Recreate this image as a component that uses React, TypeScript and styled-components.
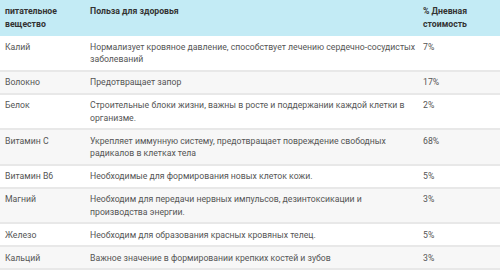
import React from "react";
import styled, { createGlobalStyle } from "styled-components";

const GlobalStyle = createGlobalStyle`
  html, body {
    margin: 0;
    padding: 0;
    background: #ffffff;
  }
  body {
    font-family: Roboto, "Noto Sans", sans-serif;
  }
`;

const StyledTable = styled.table`
  width: 500px;
  border-collapse: collapse;
  table-layout: fixed;
  font-size: 8.7px;
  line-height: 12.5px;
  color: #555555;
`;

const StyledHeadCell = styled.th<{ $width: number }>`
  width: ${(p) => p.$width}px;
  background: #c3ebf5;
  color: #333333;
  font-weight: 700;
  line-height: 13px;
  text-align: left;
  vertical-align: top;
  padding: 5px 2px 5px 5px;
`;

const StyledRow = styled.tr<{ $striped: boolean }>`
  background: ${(p) => (p.$striped ? "#f7f7f7" : "#ffffff")};
  border-bottom: 2px solid #e8e8e8;
`;

const StyledCell = styled.td`
  vertical-align: top;
  padding: 4.5px 2px 4px 5px;
`;

const rows = [
  ["Калий", "Нормализует кровяное давление, способствует лечению сердечно-сосудистых заболеваний", "7%"],
  ["Волокно", "Предотвращает запор", "17%"],
  ["Белок", "Строительные блоки жизни, важны в росте и поддержании каждой клетки в организме.", "2%"],
  ["Витамин C", "Укрепляет иммунную систему, предотвращает повреждение свободных радикалов в клетках тела", "68%"],
  ["Витамин B6", "Необходимые для формирования новых клеток кожи.", "5%"],
  ["Магний", "Необходим для передачи нервных импульсов, дезинтоксикации и производства энергии.", "3%"],
  ["Железо", "Необходим для образования красных кровяных телец.", "5%"],
  ["Кальций", "Важное значение в формировании крепких костей и зубов", "3%"],
];

export default function App() {
  return (
    <>
      <GlobalStyle />
      <StyledTable>
        <thead>
          <tr>
            <StyledHeadCell $width={78}>питательное вещество</StyledHeadCell>
            <StyledHeadCell $width={326}>Польза для здоровья</StyledHeadCell>
            <StyledHeadCell $width={75}>% Дневная стоимость</StyledHeadCell>
          </tr>
        </thead>
        <tbody>
          {rows.map((r, i) => (
            <StyledRow key={r[0]} $striped={i % 2 === 1}>
              <StyledCell>{r[0]}</StyledCell>
              <StyledCell>{r[1]}</StyledCell>
              <StyledCell>{r[2]}</StyledCell>
            </StyledRow>
          ))}
        </tbody>
      </StyledTable>
    </>
  );
}
